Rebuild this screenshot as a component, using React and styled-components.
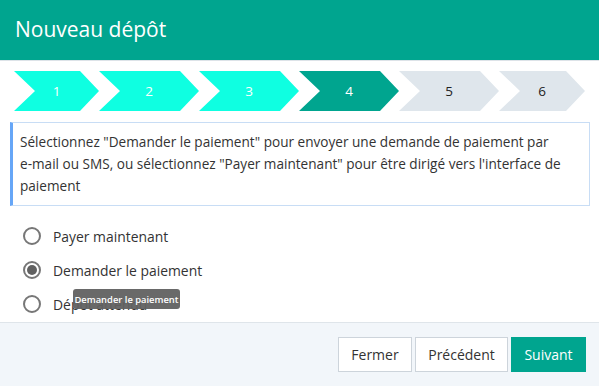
import React from "react";
import styled, { createGlobalStyle } from "styled-components";

const Global = createGlobalStyle`
  html, body { margin: 0; padding: 0; background: #fff; }
  body { font-family: "Open Sans", "Liberation Sans", sans-serif; }
  * { box-sizing: border-box; }
`;

const Dialog = styled.div`
  width: 599px;
  height: 386px;
  display: flex;
  flex-direction: column;
  background: #fff;
  overflow: hidden;
`;

const Header = styled.header`
  height: 61px;
  flex: none;
  background: #00a58f;
  border-bottom: 1px solid #dde3e8;
  display: flex;
  align-items: center;
  padding: 0 15px 2px;
  color: #fff;
  font-size: 21px;
`;

const Body = styled.div`
  flex: 1;
  overflow: hidden;
  padding-top: 10px;
`;

const Steps = styled.div`
  display: grid;
  grid-template-columns: 85px repeat(4, 100px) 86px;
  padding: 0 14px;
  height: 40px;
`;

const stepColors = {
  done: { bg: "#0fffe1", fg: "#fff" },
  current: { bg: "#00a58f", fg: "#fff" },
  todo: { bg: "#dfe6ec", fg: "#222" },
};

const Step = styled.div`
  height: 40px;
  background: ${(p) => stepColors[p.$state].bg};
  color: ${(p) => stepColors[p.$state].fg};
  clip-path: polygon(0 0, calc(100% - 19px) 0, 100% 50%, calc(100% - 19px) 100%, 0 100%, 21px 50%);
  display: flex;
  align-items: center;
  justify-content: center;
  font-size: 13.5px;
`;

const Info = styled.div`
  margin: 11px 9px 0 10px;
  border: 1px solid #c8ddf5;
  border-left: 3px solid #66a6f7;
  padding: 8px 10px 8px 7px;
  font-size: 13.6px;
  line-height: 22px;
  color: #333;
`;

const NoWrap = styled.span`
  white-space: nowrap;
`;

const RadioList = styled.div`
  margin-top: 13px;
  padding-left: 23px;
  display: flex;
  flex-direction: column;
  position: relative;
`;

const RadioRow = styled.label`
  height: 34px;
  display: flex;
  align-items: center;
  gap: 12px;
  font-size: 13.9px;
  color: #333;
`;

const Circle = styled.span`
  width: 18px;
  height: 18px;
  border-radius: 50%;
  border: 2px solid #777;
  display: flex;
  align-items: center;
  justify-content: center;
  flex: none;
  &::after {
    content: "";
    width: 10px;
    height: 10px;
    border-radius: 50%;
    background: ${(p) => (p.$checked ? "#616161" : "transparent")};
  }
`;

const Tooltip = styled.div`
  position: absolute;
  left: 73px;
  top: 70px;
  width: 107px;
  height: 20px;
  display: flex;
  align-items: center;
  justify-content: center;
  background: rgba(97, 97, 97, 0.95);
  color: #fff;
  font-family: "Open Sans", "Liberation Sans", sans-serif;
  font-weight: 600;
  font-size: 9.4px;
  border-radius: 3px;
  white-space: nowrap;
`;

const Footer = styled.footer`
  flex: none;
  height: 64px;
  background: #f2f6fa;
  border-top: 1px solid #dfe5ea;
  display: flex;
  justify-content: flex-end;
  align-items: center;
  gap: 3px;
  padding: 0 13px 1px 0;
`;

const Button = styled.button`
  height: 35px;
  width: ${(p) => p.$w}px;
  padding: 0;
  border: 1px solid ${(p) => (p.$primary ? "#00a58f" : "#cdd4db")};
  background: ${(p) => (p.$primary ? "#00a58f" : "#fff")};
  color: ${(p) => (p.$primary ? "#fff" : "#333")};
  font-family: "Open Sans", "Liberation Sans", sans-serif;
  font-size: 14px;
  border-radius: 0;
  cursor: pointer;
`;

const steps = [
  ["1", "done"],
  ["2", "done"],
  ["3", "done"],
  ["4", "current"],
  ["5", "todo"],
  ["6", "todo"],
];

const options = [
  ["Payer maintenant", false],
  ["Demander le paiement", true],
  ["Dépôt attendu", false],
];

export default function App() {
  return (
    <>
      <Global />
      <Dialog>
        <Header>Nouveau dépôt</Header>
        <Body>
          <Steps>
            {steps.map(([n, s]) => (
              <Step key={n} $state={s}>{n}</Step>
            ))}
          </Steps>
          <Info>
            Sélectionnez "Demander le paiement" pour envoyer une demande de paiement par{" "}
            <NoWrap>e-mail</NoWrap> ou SMS, ou sélectionnez "Payer maintenant" pour être dirigé vers
            l'interface de paiement
          </Info>
          <RadioList>
            {options.map(([label, checked]) => (
              <RadioRow key={label}>
                <Circle $checked={checked} />
                {label}
              </RadioRow>
            ))}
            <Tooltip>Demander le paiement</Tooltip>
          </RadioList>
        </Body>
        <Footer>
          <Button $w={74}>Fermer</Button>
          <Button $w={93}>Précédent</Button>
          <Button $w={75} $primary>Suivant</Button>
        </Footer>
      </Dialog>
    </>
  );
}
